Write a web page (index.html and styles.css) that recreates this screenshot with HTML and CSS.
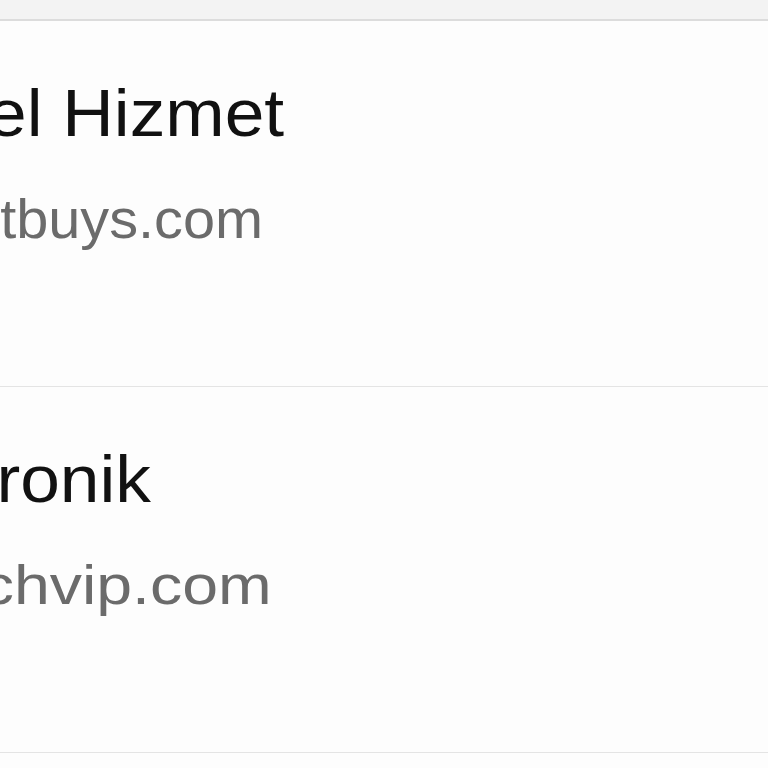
FILE: index.html
```html
<!DOCTYPE html>
<html>
<head>
    <title>Firmalar</title>
    <link rel="stylesheet" href="styles.css">
</head>
<body>
<div class="topbar"></div>
<ul class="list">
    <li class="item">
        <div class="name shift-ozel">Özel Hizmet</div>
        <div class="site shift-smart">smartbuys.com</div>
    </li>
    <li class="item">
        <div class="name shift-elek">Elektronik</div>
        <div class="site shift-tech">techvip.com</div>
    </li>
    <li class="item"></li>
</ul>
</body>
</html>
```

FILE: styles.css
```css
body {
    margin: 0;
    background-color: #fdfdfd;
    font-family: 'Liberation Sans', Arial, sans-serif;
    overflow: hidden;
}
.topbar {
    height: 19px;
    background-color: #f3f3f3;
    border-bottom: 2px solid #dcdcdc;
}
.list {
    list-style: none;
    margin: 0;
    padding: 0;
}
.item {
    height: 366px;
    box-sizing: border-box;
    padding-top: 59px;
    border-bottom: 1px solid #e4e4e4;
    background-color: #fdfdfd;
    white-space: nowrap;
    overflow: hidden;
}
.name {
    font-size: 66px;
    line-height: 66px;
    color: #111111;
    transform-origin: 0 0;
    transform: scaleX(1.08);
}
.site {
    font-size: 56px;
    line-height: 56px;
    color: #6b6b6b;
    margin-top: 45px;
    transform-origin: 0 0;
}
.shift-ozel { margin-left: -104px; }
.shift-elek { margin-left: -162px; }
.shift-smart {
    margin-left: -128px;
    transform: scaleX(1.03);
}
.shift-tech {
    margin-left: -72px;
    transform: scaleX(1.15);
}
```
